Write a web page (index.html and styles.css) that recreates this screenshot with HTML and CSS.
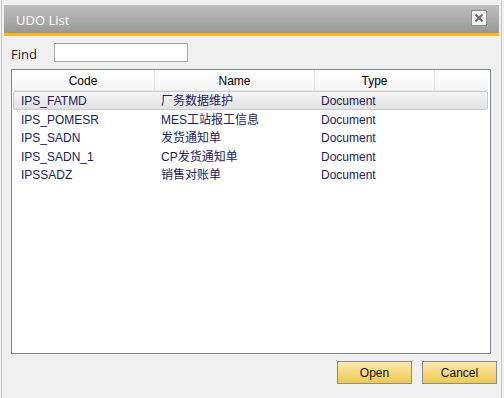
FILE: index.html
```html
<!DOCTYPE html>
<html lang="zh-CN">
<head>
    <meta charset="UTF-8">
    <title>UDO List</title>
    <link rel="stylesheet" href="styles.css">
</head>
<body>
    <div class="dialog">
        <div class="title-bar">
            <span class="title-text">UDO List</span>
            <button class="close-btn" aria-label="Close">
                <svg width="10" height="10" viewBox="0 0 10 10">
                    <path d="M1.5 1.5 L8.5 8.5 M8.5 1.5 L1.5 8.5" stroke="#6e6e6e" stroke-width="2" fill="none"/>
                </svg>
            </button>
        </div>

        <div class="dialog-body">
            <div class="find-row">
                <label class="find-label" for="find">Find</label>
                <input id="find" class="find-input" type="text">
            </div>

            <div class="list-box">
                <div class="list-header">
                    <div class="col col-code">Code</div>
                    <div class="col col-name">Name</div>
                    <div class="col col-type">Type</div>
                    <div class="col col-fill"></div>
                </div>

                <div class="list-row selected">
                    <div class="cell cell-code">IPS_FATMD</div>
                    <div class="cell cell-name">厂务数据维护</div>
                    <div class="cell cell-type">Document</div>
                </div>
                <div class="list-row">
                    <div class="cell cell-code">IPS_POMESR</div>
                    <div class="cell cell-name">MES工站报工信息</div>
                    <div class="cell cell-type">Document</div>
                </div>
                <div class="list-row">
                    <div class="cell cell-code">IPS_SADN</div>
                    <div class="cell cell-name">发货通知单</div>
                    <div class="cell cell-type">Document</div>
                </div>
                <div class="list-row">
                    <div class="cell cell-code">IPS_SADN_1</div>
                    <div class="cell cell-name">CP发货通知单</div>
                    <div class="cell cell-type">Document</div>
                </div>
                <div class="list-row">
                    <div class="cell cell-code">IPSSADZ</div>
                    <div class="cell cell-name">销售对账单</div>
                    <div class="cell cell-type">Document</div>
                </div>
            </div>

            <div class="actions">
                <button class="btn">Open</button>
                <button class="btn">Cancel</button>
            </div>
        </div>
    </div>
</body>
</html>
```

FILE: styles.css
```css
* {
    margin: 0;
    padding: 0;
    box-sizing: border-box;
}

body {
    background: #f0f0f0;
    font-family: 'Liberation Sans', Arial, 'Noto Sans CJK SC', sans-serif;
    font-size: 12px;
    color: #000;
}

.dialog {
    width: 501px;
    height: 398px;
    margin-left: 1px;
    border-left: 1px solid #c6c6c6;
    border-right: 1px solid #c6c6c6;
    padding: 5px 2px 0 2px;
    background: #f0f0f0;
    display: flex;
    flex-direction: column;
}

.title-bar {
    height: 31px;
    background: linear-gradient(to bottom, #bebebe 0%, #989898 100%);
    border-bottom: 3px solid #fbb817;
    display: flex;
    align-items: center;
    justify-content: space-between;
    padding: 0 12px;
}

.title-text {
    font-family: 'Open Sans', 'Noto Sans', sans-serif;
    font-size: 13px;
    color: #fff;
    padding-top: 1px;
}

.close-btn {
    width: 16px;
    height: 16px;
    margin-bottom: 2px;
    border: 1px solid #8d8d8d;
    background: #f4f4f4;
    display: flex;
    align-items: center;
    justify-content: center;
    cursor: pointer;
}

.dialog-body {
    padding: 7px 2px 0 7px;
    display: flex;
    flex-direction: column;
    gap: 7px;
}

.find-row {
    display: flex;
    align-items: center;
    height: 19px;
}

.find-label {
    font-family: 'Open Sans', 'Noto Sans', sans-serif;
    font-size: 13px;
    color: #222;
    width: 43px;
    padding-top: 3px;
}

.find-input {
    width: 134px;
    height: 19px;
    border: 1px solid #a9a9a9;
    background: #fff;
}

.list-box {
    height: 285px;
    margin-right: 6px;
    background: #fff;
    border: 1px solid #828790;
    padding-right: 2px;
}

.list-header {
    display: flex;
    height: 21px;
    border-bottom: 1px solid #e8e8e8;
}

.col {
    background: linear-gradient(to bottom, #ffffff 0%, #f6f6f6 100%);
    border-right: 1px solid #e3e3e3;
    text-align: center;
    line-height: 14px;
    padding-top: 4px;
}

.col-code {
    width: 143px;
}

.col-name {
    width: 160px;
}

.col-type {
    width: 120px;
}

.col-fill {
    flex: 1;
    border-right: none;
}

.list-row {
    display: flex;
    height: 18.5px;
    margin-left: 1px;
    border: 1px solid transparent;
    border-radius: 2px;
    color: #1b2260;
}

.list-row.selected {
    background: linear-gradient(to bottom, #f5f5f5 0%, #e1e1e1 100%);
    border-color: #cbcbcb;
}

.cell {
    padding: 2px 0 0 6px;
    line-height: 14px;
    white-space: nowrap;
}

.cell-code {
    width: 141px;
    padding-left: 7px;
}

.cell-name {
    width: 160px;
}

.cell-type {
    width: 120px;
}

.actions {
    display: flex;
    justify-content: flex-end;
    gap: 10px;
}

.btn {
    width: 75px;
    height: 23px;
    border: 1px solid #8c8c8c;
    background: linear-gradient(to bottom, #fbeab0 0%, #f1c84e 100%);
    font-family: 'Liberation Sans', Arial, sans-serif;
    font-size: 12px;
    color: #111;
    cursor: pointer;
}
```
